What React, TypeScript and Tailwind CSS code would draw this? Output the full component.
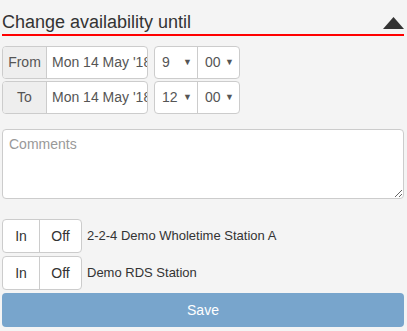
const font = { fontFamily: '"Liberation Sans", Arial, sans-serif' };

function Toggle({ label }: { label: string }) {
  return (
    <div className="flex h-[34px] items-center">
      <div className="flex h-full w-[80px] overflow-hidden rounded-[4px] border border-[#cccccc] bg-white text-[14px] text-[#333333]">
        <button className="flex w-[37px] items-center justify-center border-r border-[#cccccc]">In</button>
        <button className="flex flex-1 items-center justify-center">Off</button>
      </div>
      <span className="ml-[5px] text-[13px] text-[#333333]">{label}</span>
    </div>
  );
}

function TimeRow({ label, hour }: { label: string; hour: string }) {
  return (
    <div className="flex h-[33px]">
      <div className="flex w-[146px] overflow-hidden rounded-[4px] border border-[#cccccc] bg-white">
        <span className="flex w-[44px] items-center justify-center border-r border-[#cccccc] bg-[#eeeeee] text-[14px] text-[#555555]">
          {label}
        </span>
        <span className="flex flex-1 items-center overflow-hidden whitespace-nowrap pl-[5px] text-[14px] text-[#555555]">
          Mon 14 May '18
        </span>
      </div>
      <div className="ml-[6px] flex w-[86px] overflow-hidden rounded-[4px] border border-[#cccccc] bg-white text-[14px] text-[#555555]">
        <span className="flex w-[43px] items-center justify-between border-r border-[#cccccc] pl-[7px] pr-[5px]">
          {hour}
          <span className="text-[9px]">▼</span>
        </span>
        <span className="flex flex-1 items-center justify-between pl-[7px] pr-[5px]">
          00
          <span className="text-[9px]">▼</span>
        </span>
      </div>
    </div>
  );
}

export default function App() {
  return (
    <div className="h-[331px] w-[407px] bg-[#f4f4f4] pl-[2px] pr-[3px]" style={font}>
      <div className="flex h-[36px] items-end justify-between border-b-2 border-[#ff0000] pb-[2px]">
        <h2 className="text-[18px] leading-[20px] text-[#333333]">Change availability until</h2>
        <svg width="21" height="12" viewBox="0 0 21 12" className="mb-[3px]">
          <polygon points="10.5,0 21,12 0,12" fill="#333333" />
        </svg>
      </div>

      <div className="mt-[10px] flex flex-col gap-[2px]">
        <TimeRow label="From" hour="9" />
        <TimeRow label="To" hour="12" />
      </div>

      <textarea
        placeholder="Comments"
        className="mt-[15px] block h-[70px] w-full rounded-[4px] border border-[#cccccc] bg-white px-[6px] py-[4px] text-[14px] text-[#555555] placeholder:text-[#999999]"
      />

      <div className="mt-[20px] flex flex-col gap-[3px]">
        <Toggle label="2-2-4 Demo Wholetime Station A" />
        <Toggle label="Demo RDS Station" />
      </div>

      <button className="mt-[3px] flex h-[34px] w-full items-center justify-center rounded-[4px] bg-[#78a5cc] text-[14px] text-white">
        Save
      </button>
    </div>
  );
}
